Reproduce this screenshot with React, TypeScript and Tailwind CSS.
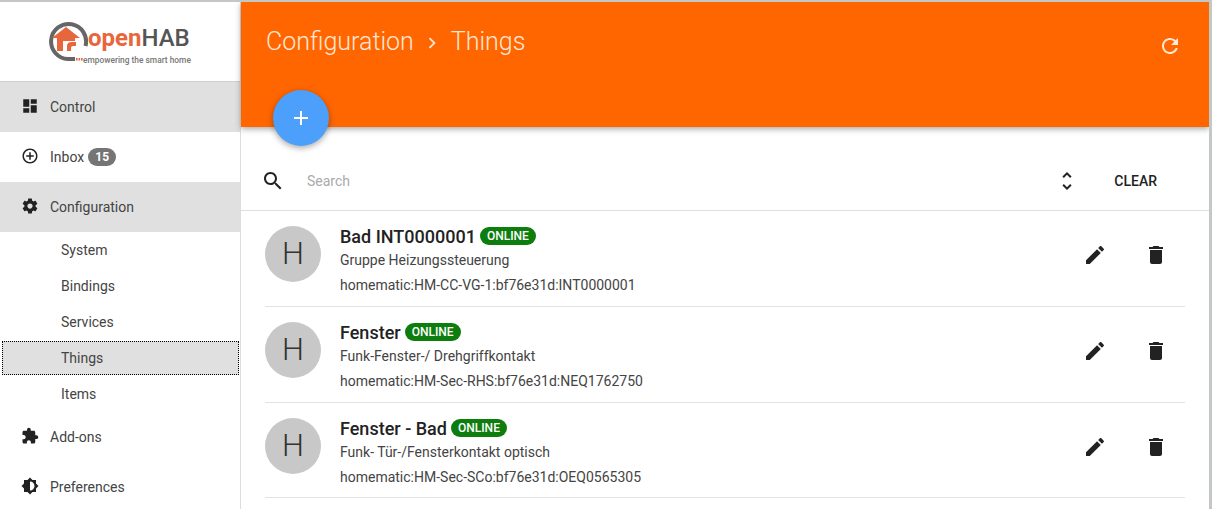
import React from "react";

const P = ({ d, size = 24, className = "" }: { d: string; size?: number; className?: string }) => (
  <svg width={size} height={size} viewBox="0 0 24 24" fill="currentColor" className={className}>
    <path d={d} />
  </svg>
);

const icons = {
  control: "M3 13h8V3H3v10zm0 8h8v-6H3v6zm10 0h8V11h-8v10zm0-18v6h8V3h-8z",
  inbox: "M13 7h-2v4H7v2h4v4h2v-4h4v-2h-4V7zm-1-5C6.48 2 2 6.48 2 12s4.48 10 10 10 10-4.48 10-10S17.52 2 12 2zm0 18c-4.41 0-8-3.59-8-8s3.59-8 8-8 8 3.59 8 8-3.59 8-8 8z",
  gear: "M19.43 12.98c.04-.32.07-.64.07-.98s-.03-.66-.07-.98l2.11-1.65c.19-.15.24-.42.12-.64l-2-3.46c-.12-.22-.39-.3-.61-.22l-2.49 1c-.52-.4-1.08-.73-1.69-.98l-.38-2.65C14.46 2.18 14.25 2 14 2h-4c-.25 0-.46.18-.49.42l-.38 2.65c-.61.25-1.17.59-1.69.98l-2.49-1c-.23-.09-.49 0-.61.22l-2 3.46c-.13.22-.07.49.12.64l2.11 1.65c-.04.32-.07.65-.07.98s.03.66.07.98l-2.11 1.65c-.19.15-.24.42-.12.64l2 3.46c.12.22.39.3.61.22l2.49-1c.52.4 1.08.73 1.69.98l.38 2.65c.03.24.24.42.49.42h4c.25 0 .46-.18.49-.42l.38-2.65c.61-.25 1.17-.59 1.69-.98l2.49 1c.23.09.49 0 .61-.22l2-3.46c.12-.22.07-.49-.12-.64l-2.11-1.65zM12 15.5c-1.93 0-3.5-1.57-3.5-3.5s1.57-3.5 3.5-3.5 3.5 1.57 3.5 3.5-1.57 3.5-3.5 3.5z",
  puzzle: "M20.5 11H19V7c0-1.1-.9-2-2-2h-4V3.5C13 2.12 11.88 1 10.5 1S8 2.12 8 3.5V5H4c-1.1 0-1.99.9-1.99 2v3.8H3.5c1.49 0 2.7 1.21 2.7 2.7s-1.21 2.7-2.7 2.7H2V20c0 1.1.9 2 2 2h3.8v-1.5c0-1.49 1.21-2.7 2.7-2.7 1.49 0 2.7 1.21 2.7 2.7V22H17c1.1 0 2-.9 2-2v-4h1.5c1.38 0 2.5-1.12 2.5-2.5S21.88 11 20.5 11z",
  brightness: "M20 15.31L23.31 12 20 8.69V4h-4.69L12 .69 8.69 4H4v4.69L.69 12 4 15.31V20h4.69L12 23.31 15.31 20H20v-4.69zM12 18V6c3.31 0 6 2.69 6 6s-2.69 6-6 6z",
  refresh: "M17.65 6.35C16.2 4.9 14.21 4 12 4c-4.42 0-7.99 3.58-7.99 8s3.57 8 7.99 8c3.73 0 6.84-2.55 7.73-6h-2.08c-.82 2.33-3.04 4-5.65 4-3.31 0-6-2.69-6-6s2.69-6 6-6c1.66 0 3.14.69 4.22 1.78L13 11h7V4l-2.35 2.35z",
  plus: "M19 13h-6v6h-2v-6H5v-2h6V5h2v6h6v2z",
  search: "M15.5 14h-.79l-.28-.27C15.41 12.59 16 11.11 16 9.5 16 5.91 13.09 3 9.5 3S3 5.91 3 9.5 5.91 16 9.5 16c1.61 0 3.09-.59 4.23-1.57l.27.28v.79l5 4.99L20.49 19l-4.99-5zm-6 0C7.01 14 5 11.99 5 9.5S7.01 5 9.5 5 14 7.01 14 9.5 11.99 14 9.5 14z",
  sort: "M12 5.83L15.17 9l1.41-1.41L12 3 7.41 7.59 8.83 9 12 5.83zm0 12.34L8.83 15l-1.41 1.41L12 21l4.59-4.59L15.17 15 12 18.17z",
  edit: "M3 17.25V21h3.75L17.81 9.94l-3.75-3.75L3 17.25zM20.71 7.04c.39-.39.39-1.02 0-1.41l-2.34-2.34c-.39-.39-1.02-.39-1.41 0l-1.83 1.83 3.75 3.75 1.83-1.83z",
  trash: "M6 19c0 1.1.9 2 2 2h8c1.1 0 2-.9 2-2V7H6v12zM19 4h-3.5l-1-1h-5l-1 1H5v2h14V4z",
  chevron: "M10 6L8.59 7.41 13.17 12l-4.58 4.59L10 18l6-6z",
};

const Main = ({ icon, label, active, badge }: { icon: string; label: string; active?: boolean; badge?: string }) => (
  <div className={`flex h-[50px] items-center pl-[21px] text-[14px] text-[#444] ${active ? "bg-[#e0e0e0]" : ""}`}>
    <P d={icon} size={18} className="-mt-[2px] text-[#222]" />
    <span className="ml-[11px]">{label}</span>
    {badge && (
      <span className="ml-[4px] flex h-[18px] w-[28px] items-center justify-center rounded-full bg-[#757575] text-[12px] font-bold text-white">
        {badge}
      </span>
    )}
  </div>
);

const Sub = ({ label, active }: { label: string; active?: boolean }) =>
  active ? (
    <div className="my-[1px] ml-[2px] mr-[1px] flex h-[34px] items-center border border-dotted border-black bg-[#e0e0e0] pl-[58px] text-[14px] text-[#444]">
      {label}
    </div>
  ) : (
    <div className="flex h-[36px] items-center pl-[61px] text-[14px] text-[#444]">{label}</div>
  );

const Row = ({ title, sub, uid, last }: { title: string; sub: string; uid: string; last?: boolean }) => (
  <div className={`mx-[24px] flex items-start border-b border-[#e3e3e3] pt-[15px] ${last ? "h-[95px]" : "h-[96px]"}`}>
    <div className="flex h-[56px] w-[56px] shrink-0 items-center justify-center rounded-full bg-[#c8c8c8] text-[31px] font-light text-[#333]">
      H
    </div>
    <div className="ml-[19px] flex-1">
      <div className="flex h-[20px] items-center">
        <span className="text-[18px] font-medium text-[#222]">{title}</span>
        <span className="ml-[4px] flex h-[18px] w-[56px] items-center justify-center rounded-full bg-[#0d7d0d] text-[12px] font-medium text-white">
          ONLINE
        </span>
      </div>
      <div className="mt-[4px] text-[14px] leading-[20px] text-[#444]">{sub}</div>
      <div className="mt-[5px] text-[14px] leading-[20px] text-[#444]">{uid}</div>
    </div>
    <div className="mr-[17px] mt-[17px] flex items-center gap-[37px] text-[#222]">
      <P d={icons.edit} />
      <P d={icons.trash} />
    </div>
  </div>
);

const Logo = () => (
  <div className="flex h-[80px] items-start border-b border-[#cfcfcf] pl-[47px] pt-[19px]">
    <svg width="41" height="42" viewBox="0 0 41 42" className="shrink-0">
      <path d="M38.5 25 A17.5 17.5 0 1 0 21 38 H28" fill="none" stroke="#666" strokeWidth="4" />
      <path d="M29 37h1.6v2.4H29zM31.5 37h1.6v2.4h-1.6zM34 37h1.6v2.4H34z" fill="#e8663c" />
      <path d="M19 6 L5 17 H10 V30 H16 V20 H28 V17 H33z" fill="#e8663c" />
      <path d="M20 30 V25 Q20 21 25 21 H29 V25 H26 Q24 25 24 27 V30z" fill="#e8663c" />
    </svg>
    <div className="flex flex-col">
      <div className="flex h-[34px] items-baseline whitespace-nowrap pt-[5px] leading-none">
        <span className="text-[24px] font-bold text-[#e8663c]">open</span>
        <span className="text-[24px] font-medium text-[#555]">HAB</span>
      </div>
      <span className="-ml-[5px] whitespace-nowrap text-[8.4px] font-medium leading-[10px] text-[#777]">
        empowering the smart home
      </span>
    </div>
  </div>
);

export default function App() {
  return (
    <div
      className="flex h-[509px] w-[1212px] overflow-hidden border-r-[3px] border-t-2 border-[#c4c8c4] bg-white"
      style={{ fontFamily: "Roboto, sans-serif" }}
    >
      <aside className="w-[241px] shrink-0 border-r border-[#dcdcdc]">
        <Logo />
        <Main icon={icons.control} label="Control" active />
        <Main icon={icons.inbox} label="Inbox" badge="15" />
        <Main icon={icons.gear} label="Configuration" active />
        <Sub label="System" />
        <Sub label="Bindings" />
        <Sub label="Services" />
        <Sub label="Things" active />
        <Sub label="Items" />
        <Main icon={icons.puzzle} label="Add-ons" />
        <Main icon={icons.brightness} label="Preferences" />
      </aside>
      <main className="relative min-w-0 flex-1">
        <header className="flex h-[125px] items-start justify-between bg-[#ff6600] pl-[25px] pr-[27px] shadow-[0_2px_6px_rgba(0,0,0,0.35)]">
          <div className="mt-[24px] flex items-center text-[25px] font-light leading-[32px] text-[#ffe7d5]">
            Configuration
            <P d={icons.chevron} size={22} className="ml-[7px] mr-[8px] mt-[2px]" />
            Things
          </div>
          <P d={icons.refresh} size={24} className="mt-[32px] text-[#ffe7d5]" />
        </header>
        <button className="absolute left-[32px] top-[88px] flex h-[56px] w-[56px] items-center justify-center rounded-full bg-[#4c9ffa] text-white shadow-[0_2px_6px_rgba(0,0,0,0.35)]">
          <P d={icons.plus} size={24} />
        </button>
        <div className="flex h-[84px] items-end border-b border-[#dedede] pb-[17px] pl-[20px]">
          <P d={icons.search} className="text-[#222]" />
          <span className="ml-[22px] flex-1 text-[14px] leading-[24px] text-[#aaa]">Search</span>
          <P d={icons.sort} size={24} className="text-[#222]" />
          <span className="ml-[35px] mr-[52px] text-[14px] font-medium leading-[24px] text-[#222]">CLEAR</span>
        </div>
        <Row title="Bad INT0000001" sub="Gruppe Heizungssteuerung" uid="homematic:HM-CC-VG-1:bf76e31d:INT0000001" />
        <Row title="Fenster" sub="Funk-Fenster-/ Drehgriffkontakt" uid="homematic:HM-Sec-RHS:bf76e31d:NEQ1762750" />
        <Row title="Fenster - Bad" sub="Funk- Tür-/Fensterkontakt optisch" uid="homematic:HM-Sec-SCo:bf76e31d:OEQ0565305" last />
      </main>
    </div>
  );
}
